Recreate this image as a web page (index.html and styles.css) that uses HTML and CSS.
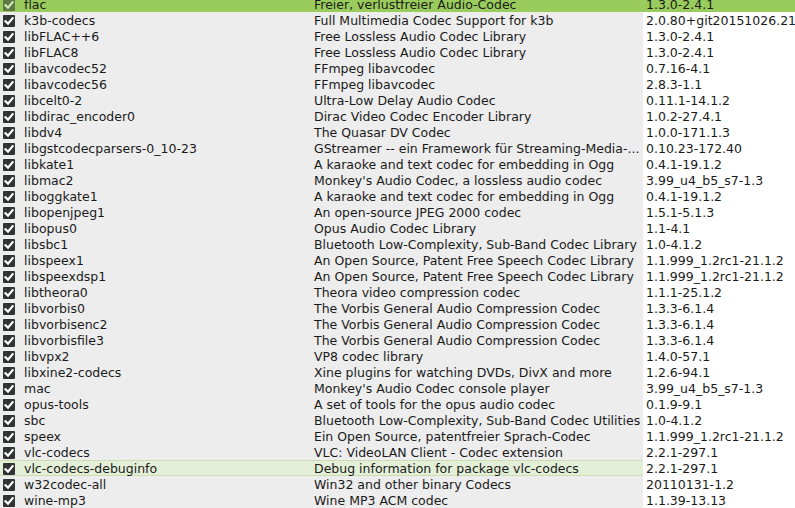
FILE: index.html
```html
<!DOCTYPE html>
<html lang="de">
<head>
    <meta charset="UTF-8">
    <title>Pakete</title>
    <link rel="stylesheet" href="styles.css">
</head>
<body>
    <div class="pkg-list">
        <div class="row selected"><span class="chk"></span><span class="name">flac</span><span class="desc">Freier, verlustfreier Audio-Codec</span><span class="ver">1.3.0-2.4.1</span></div>
        <div class="row"><span class="chk"></span><span class="name">k3b-codecs</span><span class="desc">Full Multimedia Codec Support for k3b</span><span class="ver">2.0.80+git20151026.2100-1.1</span></div>
        <div class="row"><span class="chk"></span><span class="name">libFLAC++6</span><span class="desc">Free Lossless Audio Codec Library</span><span class="ver">1.3.0-2.4.1</span></div>
        <div class="row"><span class="chk"></span><span class="name">libFLAC8</span><span class="desc">Free Lossless Audio Codec Library</span><span class="ver">1.3.0-2.4.1</span></div>
        <div class="row"><span class="chk"></span><span class="name">libavcodec52</span><span class="desc">FFmpeg libavcodec</span><span class="ver">0.7.16-4.1</span></div>
        <div class="row"><span class="chk"></span><span class="name">libavcodec56</span><span class="desc">FFmpeg libavcodec</span><span class="ver">2.8.3-1.1</span></div>
        <div class="row"><span class="chk"></span><span class="name">libcelt0-2</span><span class="desc">Ultra-Low Delay Audio Codec</span><span class="ver">0.11.1-14.1.2</span></div>
        <div class="row"><span class="chk"></span><span class="name">libdirac_encoder0</span><span class="desc">Dirac Video Codec Encoder Library</span><span class="ver">1.0.2-27.4.1</span></div>
        <div class="row"><span class="chk"></span><span class="name">libdv4</span><span class="desc">The Quasar DV Codec</span><span class="ver">1.0.0-171.1.3</span></div>
        <div class="row"><span class="chk"></span><span class="name">libgstcodecparsers-0_10-23</span><span class="desc">GStreamer -- ein Framework für Streaming-Media-...</span><span class="ver">0.10.23-172.40</span></div>
        <div class="row"><span class="chk"></span><span class="name">libkate1</span><span class="desc">A karaoke and text codec for embedding in Ogg</span><span class="ver">0.4.1-19.1.2</span></div>
        <div class="row"><span class="chk"></span><span class="name">libmac2</span><span class="desc">Monkey's Audio Codec, a lossless audio codec</span><span class="ver">3.99_u4_b5_s7-1.3</span></div>
        <div class="row"><span class="chk"></span><span class="name">liboggkate1</span><span class="desc">A karaoke and text codec for embedding in Ogg</span><span class="ver">0.4.1-19.1.2</span></div>
        <div class="row"><span class="chk"></span><span class="name">libopenjpeg1</span><span class="desc">An open-source JPEG 2000 codec</span><span class="ver">1.5.1-5.1.3</span></div>
        <div class="row"><span class="chk"></span><span class="name">libopus0</span><span class="desc">Opus Audio Codec Library</span><span class="ver">1.1-4.1</span></div>
        <div class="row"><span class="chk"></span><span class="name">libsbc1</span><span class="desc">Bluetooth Low-Complexity, Sub-Band Codec Library</span><span class="ver">1.0-4.1.2</span></div>
        <div class="row"><span class="chk"></span><span class="name">libspeex1</span><span class="desc">An Open Source, Patent Free Speech Codec Library</span><span class="ver">1.1.999_1.2rc1-21.1.2</span></div>
        <div class="row"><span class="chk"></span><span class="name">libspeexdsp1</span><span class="desc">An Open Source, Patent Free Speech Codec Library</span><span class="ver">1.1.999_1.2rc1-21.1.2</span></div>
        <div class="row"><span class="chk"></span><span class="name">libtheora0</span><span class="desc">Theora video compression codec</span><span class="ver">1.1.1-25.1.2</span></div>
        <div class="row"><span class="chk"></span><span class="name">libvorbis0</span><span class="desc">The Vorbis General Audio Compression Codec</span><span class="ver">1.3.3-6.1.4</span></div>
        <div class="row"><span class="chk"></span><span class="name">libvorbisenc2</span><span class="desc">The Vorbis General Audio Compression Codec</span><span class="ver">1.3.3-6.1.4</span></div>
        <div class="row"><span class="chk"></span><span class="name">libvorbisfile3</span><span class="desc">The Vorbis General Audio Compression Codec</span><span class="ver">1.3.3-6.1.4</span></div>
        <div class="row"><span class="chk"></span><span class="name">libvpx2</span><span class="desc">VP8 codec library</span><span class="ver">1.4.0-57.1</span></div>
        <div class="row"><span class="chk"></span><span class="name">libxine2-codecs</span><span class="desc">Xine plugins for watching DVDs, DivX and more</span><span class="ver">1.2.6-94.1</span></div>
        <div class="row"><span class="chk"></span><span class="name">mac</span><span class="desc">Monkey's Audio Codec console player</span><span class="ver">3.99_u4_b5_s7-1.3</span></div>
        <div class="row"><span class="chk"></span><span class="name">opus-tools</span><span class="desc">A set of tools for the opus audio codec</span><span class="ver">0.1.9-9.1</span></div>
        <div class="row"><span class="chk"></span><span class="name">sbc</span><span class="desc">Bluetooth Low-Complexity, Sub-Band Codec Utilities</span><span class="ver">1.0-4.1.2</span></div>
        <div class="row"><span class="chk"></span><span class="name">speex</span><span class="desc">Ein Open Source, patentfreier Sprach-Codec</span><span class="ver">1.1.999_1.2rc1-21.1.2</span></div>
        <div class="row"><span class="chk"></span><span class="name">vlc-codecs</span><span class="desc">VLC: VideoLAN Client - Codec extension</span><span class="ver">2.2.1-297.1</span></div>
        <div class="row hover"><span class="chk"></span><span class="name">vlc-codecs-debuginfo</span><span class="desc">Debug information for package vlc-codecs</span><span class="ver">2.2.1-297.1</span></div>
        <div class="row"><span class="chk"></span><span class="name">w32codec-all</span><span class="desc">Win32 and other binary Codecs</span><span class="ver">20110131-1.2</span></div>
        <div class="row"><span class="chk"></span><span class="name">wine-mp3</span><span class="desc">Wine MP3 ACM codec</span><span class="ver">1.1.39-13.13</span></div>
    </div>
</body>
</html>
```

FILE: styles.css
```css
body {
    margin: 0;
    background-color: #ededed;
    font-family: "DejaVu Sans", sans-serif;
    font-size: 12.5px;
    color: #1a1a1a;
    overflow: hidden;
}
.pkg-list {
    margin-top: -4px;
}
.row {
    display: flex;
    height: 16px;
    line-height: 16px;
    white-space: nowrap;
}
.chk {
    flex: 0 0 21px;
    display: flex;
    align-items: center;
    padding: 1px 0 0 3px;
    box-sizing: border-box;
}
.chk::before {
    content: "";
    width: 12px;
    height: 12px;
    border-radius: 1px;
    background: #323434 url("data:image/svg+xml;utf8,<svg xmlns='http://www.w3.org/2000/svg' width='12' height='12'><path d='M2.5 6.2 L5 8.6 L9.6 3.2' fill='none' stroke='white' stroke-width='2.2' stroke-linecap='square'/></svg>") no-repeat center;
}
.selected .chk::before {
    opacity: 0.55;
}
.name, .desc, .ver {
    padding: 1px 0 0 3px;
    overflow: hidden;
    box-sizing: border-box;
}
.name {
    flex: 0 0 290px;
}
.desc {
    flex: 0 0 332px;
}
.ver {
    flex: 1;
    background-color: #fff;
}
.selected, .selected .ver {
    background-color: #99cc5c;
}
.hover .chk, .hover .name, .hover .desc {
    background-color: #e4efd8;
    box-shadow: inset 0 1px #c9dfb1, inset 0 -1px #c9dfb1;
}
```
